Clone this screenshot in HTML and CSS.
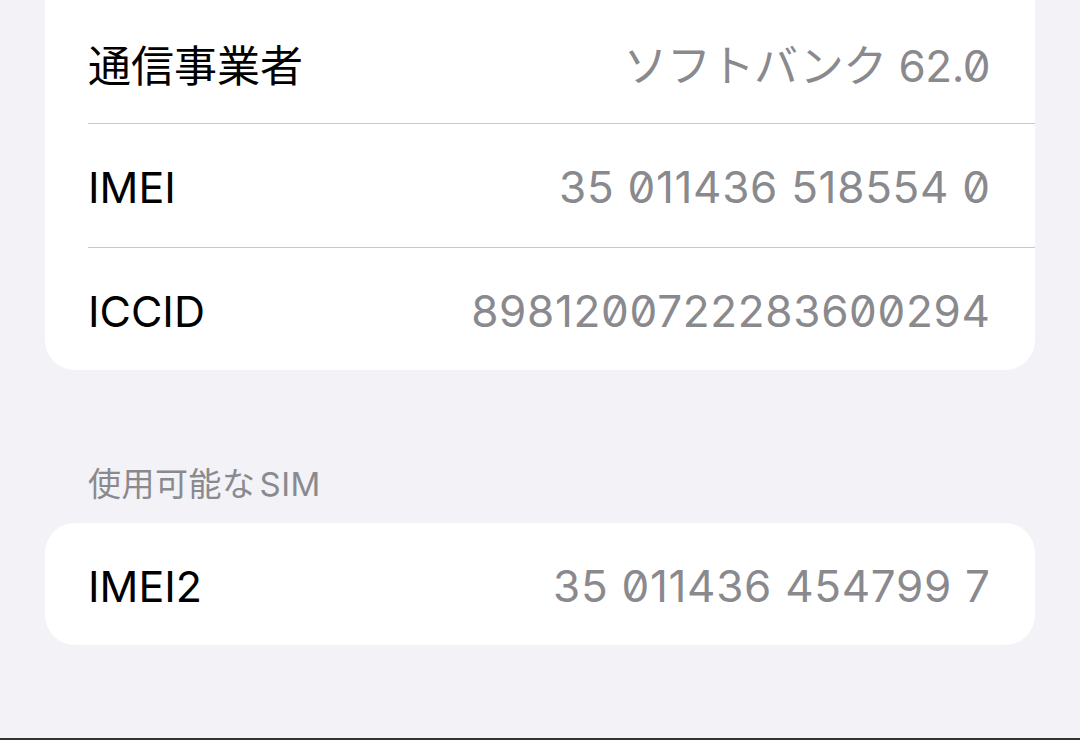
FILE: index.html
```html
<!DOCTYPE html>
<html lang="ja">
<head>
  <meta charset="UTF-8" />
  <meta name="viewport" content="width=device-width, initial-scale=1.0" />
  <title>情報</title>
  <link rel="stylesheet" href="styles.css">
</head>
<body>
  <main class="settings">
    <section class="group group-open">
      <div class="row">
        <span class="label">通信事業者</span>
        <span class="value value-text">ソフトバンク 62.0</span>
      </div>
      <div class="row">
        <span class="label">IMEI</span>
        <span class="value">35 011436 518554 0</span>
      </div>
      <div class="row">
        <span class="label">ICCID</span>
        <span class="value">8981200722283600294</span>
      </div>
    </section>

    <h2 class="group-title">使用可能な<span class="title-latin">SIM</span></h2>
    <section class="group">
      <div class="row">
        <span class="label">IMEI2</span>
        <span class="value">35 011436 454799 7</span>
      </div>
    </section>
  </main>
  <div class="screen-edge"></div>
</body>
</html>
```

FILE: styles.css
```css
body {
  margin: 0;
  padding: 0;
  height: 740px;
  overflow: hidden;
  background: #f2f2f7;
  font-family: Inter, "Noto Sans CJK JP", sans-serif;
  display: flex;
  flex-direction: column;
}

.settings {
  flex: 1;
  padding: 0 45px;
}

.group {
  background: #ffffff;
  border-radius: 30px;
  overflow: hidden;
}

/* list continues above the visible area */
.group-open {
  border-top-left-radius: 0;
  border-top-right-radius: 0;
}

.row {
  height: 124px;
  margin-left: 43px;
  padding: 3px 45px 0 0;
  display: flex;
  justify-content: space-between;
  align-items: center;
  border-bottom: 1px solid #c8c8cc;
  box-sizing: border-box;
  font-size: 43px;
}

.row:last-child {
  border-bottom: none;
  height: 122px;
}

.label {
  color: #000000;
}

.value {
  color: #8a8a8e;
  font-size: 44px;
  letter-spacing: 0.7px;
  margin-right: -0.7px;
  font-feature-settings: "zero";
}

.value-text {
  letter-spacing: -0.5px;
  margin-right: 0;
}

.group-title {
  margin: 94px 0 19px 43px;
  font-size: 33px;
  line-height: 40px;
  font-weight: normal;
  letter-spacing: 0.5px;
  color: #8a8a8e;
}

.title-latin {
  margin-left: 4px;
}

.screen-edge {
  height: 2px;
  background: #333336;
}
```
